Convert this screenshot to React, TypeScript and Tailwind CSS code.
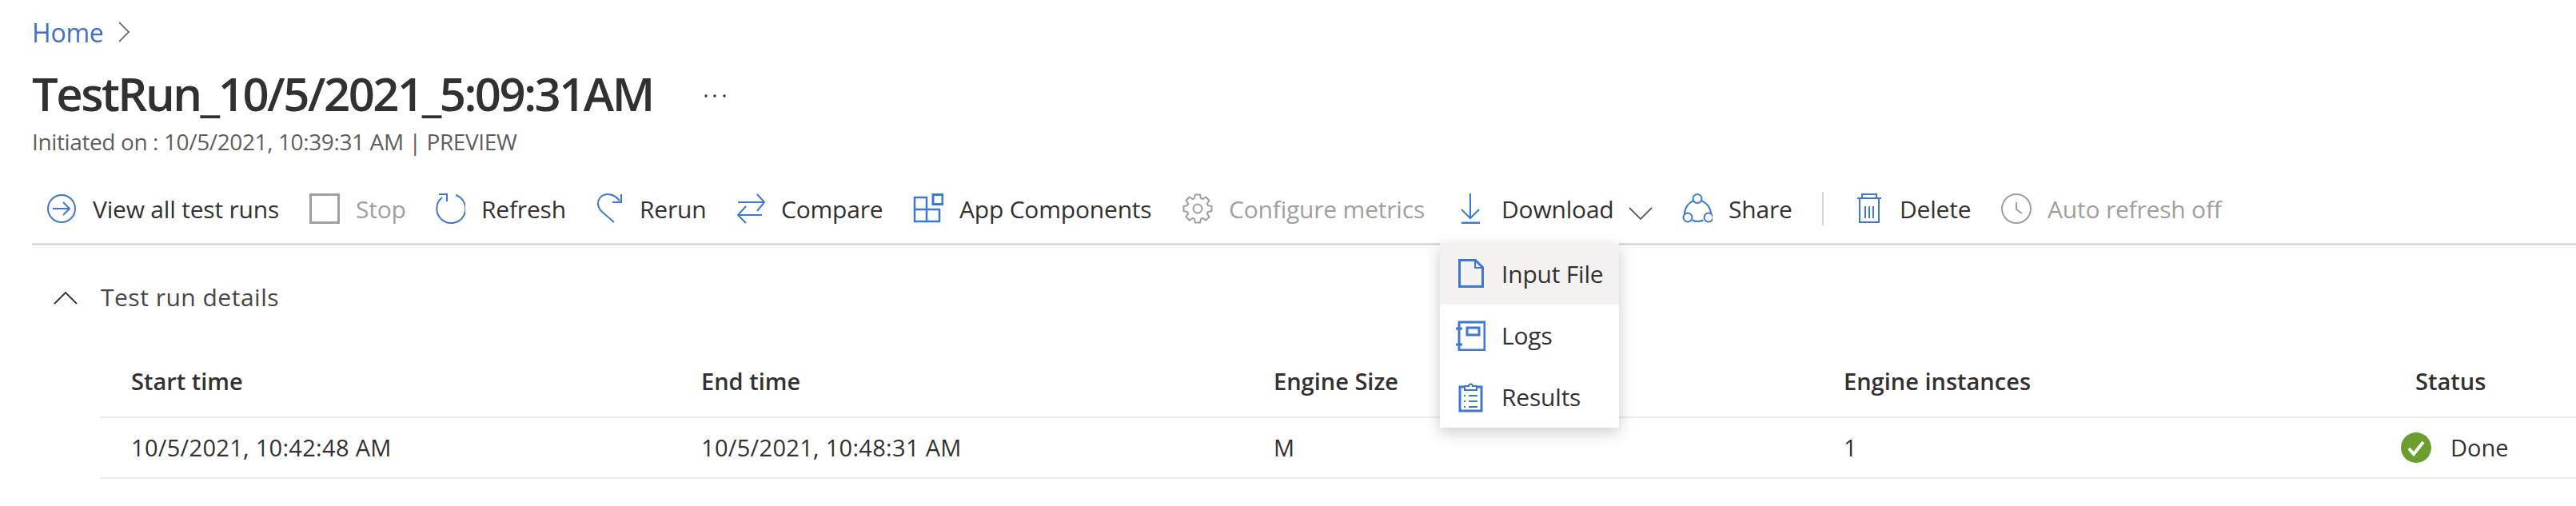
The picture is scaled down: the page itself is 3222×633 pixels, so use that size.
import type { ReactNode } from "react";

const font = "font-['Open_Sans','Noto_Sans',sans-serif]";

const IconBox = ({ children }: { children: ReactNode }) => (
  <svg width="38" height="38" viewBox="0 0 38 38" fill="none" stroke="currentColor" strokeWidth="2" className="shrink-0">
    {children}
  </svg>
);

// 8 tooth gear outline for the disabled "Configure metrics" button
const gearPath = () => {
  const pts: string[] = [];
  for (let i = 0; i < 8; i++) {
    const a = (i * Math.PI) / 4 - Math.PI / 2;
    [
      [-0.3, 13.5],
      [-0.17, 17.8],
      [0.17, 17.8],
      [0.3, 13.5],
    ].forEach(([d, r]) => {
      pts.push(`${(19 + r * Math.cos(a + d)).toFixed(1)} ${(19 + r * Math.sin(a + d)).toFixed(1)}`);
    });
  }
  return `M${pts.join("L")}Z`;
};

const tableColumns = [
  { head: "Start time", value: "10/5/2021, 10:42:48 AM", width: "w-[713px]" },
  { head: "End time", value: "10/5/2021, 10:48:31 AM", width: "w-[716px]" },
  { head: "Engine Size", value: "M", width: "w-[713px]" },
  { head: "Engine instances", value: "1", width: "w-[715px]" },
];

const ToolbarButton = ({
  label,
  icon,
  disabled,
  width,
}: {
  label: string;
  icon: ReactNode;
  disabled?: boolean;
  width?: string;
}) => (
  <div className={`flex shrink-0 items-start gap-5 ${width ?? ""}`}>
    <span className={disabled ? "text-[#a19f9d]" : "text-[#3f78d2]"}>
      <IconBox>{icon}</IconBox>
    </span>
    <span
      className={`text-[30px] leading-[40px] tracking-[-0.2px] whitespace-nowrap ${disabled ? "text-[#a19f9d]" : "text-[#323130]"}`}
    >
      {label}
    </span>
  </div>
);

const menuItems = [
  {
    label: "Input File",
    active: true,
    icon: (
      <>
        <path d="M5.5 4.5h20l9 9v24h-29z" transform="translate(0 -3)" strokeWidth="3" />
        <path d="M25 2v9h9" strokeWidth="2" />
      </>
    ),
  },
  {
    label: "Logs",
    icon: (
      <>
        <rect x="5" y="2" width="32" height="35" strokeWidth="3" />
        <rect x="15" y="9" width="15" height="9" strokeWidth="3" />
        <path d="M1 10h8M1 30h8" strokeWidth="3" />
      </>
    ),
  },
  {
    label: "Results",
    icon: (
      <>
        <path d="M12 6H6v30h27V6h-6" strokeWidth="3" />
        <path d="M12 10V5h5a2.5 2.5 0 0 1 5 0h5v5z" strokeWidth="2" />
        <path d="M11 17h2M11 24h2M11 31h2M17 17h11M17 24h11M17 31h11" strokeWidth="2" />
      </>
    ),
  },
];

export default function App() {
  return (
    <div className={`relative h-[633px] w-[3222px] overflow-hidden bg-white pt-[21px] pl-[40px] text-[#323130] ${font}`}>
      {/* breadcrumb */}
      <div className="flex h-[40px] items-center">
        <span className="text-[32px] leading-[40px] tracking-[-0.2px] text-[#3f6fc6]">Home</span>
        <svg width="14" height="26" viewBox="0 0 14 26" fill="none" stroke="#605e5c" strokeWidth="1.6" className="-mt-[2px] ml-[18px]">
          <path d="M1 1l12 12L1 25" />
        </svg>
      </div>

      {/* title */}
      <div className="mt-[16px] flex h-[80px] items-start">
        <h1 className="w-[841px] text-[58px] leading-[80px] font-semibold tracking-[-2.5px] whitespace-nowrap text-[#323130]">
          TestRun_10/5/2021_5:09:31AM
        </h1>
        <svg width="28" height="6" viewBox="0 0 28 6" fill="#323130" className="mt-[40px]">
          <circle cx="2" cy="3" r="1.7" />
          <circle cx="13" cy="3" r="1.7" />
          <circle cx="25" cy="3" r="1.7" />
        </svg>
      </div>
      <p className="mt-[2px] text-[28px] leading-[36px] tracking-[-0.38px] text-[#605e5c]">
        Initiated on : 10/5/2021, 10:39:31 AM | PREVIEW
      </p>

      {/* toolbar */}
      <div className="mt-[47px] flex items-start border-b-[3px] border-[#dcdcdc] pb-[22px] pl-[18px]">
        <div className="flex h-[40px] items-start">
          <ToolbarButton
            label="View all test runs"
            width="w-[329px]"
            icon={
              <>
                <circle cx="19" cy="19" r="17" />
                <path d="M8 19h21M21 11l8 8-8 8" />
              </>
            }
          />
          <ToolbarButton
            label="Stop"
            disabled
            width="w-[157px]"
            icon={<rect x="1.5" y="1.5" width="35" height="35" strokeWidth="3" />}
          />
          <ToolbarButton
            label="Refresh"
            width="w-[198px]"
            icon={
              <>
                <path d="M26 2A18 18 0 1 1 9 5" />
                <path d="M5 1h10v9" />
              </>
            }
          />
          <ToolbarButton
            label="Rerun"
            width="w-[177px]"
            icon={
              <>
                <path d="M33 9C28 3 23 1 18 1C11 1 6 6 6 13c0 4 2 7 5 10l15 13" />
                <path d="M35 1v10H24" />
              </>
            }
          />
          <ToolbarButton
            label="Compare"
            width="w-[223px]"
            icon={
              <>
                <path d="M4 11h32M28 1l9 10-9 11" />
                <path d="M34 27H4M14 16L4 27l10 10" />
              </>
            }
          />
          <ToolbarButton
            label="App Components"
            width="w-[337px]"
            icon={
              <>
                <path d="M2 5h15v30H2zM2 20h31v15H17" strokeWidth="2.5" />
                <rect x="25" y="1.5" width="12" height="12" strokeWidth="3" />
              </>
            }
          />
          <ToolbarButton
            label="Configure metrics"
            disabled
            width="w-[341px]"
            icon={
              <>
                <path d={gearPath()} />
                <circle cx="19" cy="19" r="5.5" />
              </>
            }
          />
          <div className="flex w-[284px] shrink-0 items-start gap-5">
            <span className="text-[#3f78d2]">
              <IconBox>
                <path d="M19 0v31M8 20l11 11 11-11" />
                <path d="M8 37h23" strokeWidth="3" />
              </IconBox>
            </span>
            <span className="w-[139px] shrink-0 text-[30px] leading-[40px] tracking-[-0.2px] whitespace-nowrap text-[#323130]">
              Download
            </span>
            <svg width="30" height="16" viewBox="0 0 30 16" fill="none" stroke="#605e5c" strokeWidth="1.8" className="mt-[17px] shrink-0">
              <path d="M1 1l14 14L29 1" />
            </svg>
          </div>
          <ToolbarButton
            label="Share"
            width="w-[175px]"
            icon={
              <>
                <circle cx="19" cy="6.5" r="5.5" />
                <circle cx="7" cy="30" r="5.5" />
                <circle cx="33" cy="30" r="5.5" />
                <path d="M14.5 9A18 18 0 0 0 3 25.5M23.5 9A18 18 0 0 1 36 25.5M12.5 33.5a18 18 0 0 0 14 0" />
              </>
            }
          />
          <div className="-mt-[2px] h-[42px] w-[2px] shrink-0 bg-[#d6d6d6]" />
          <div className="w-[37px] shrink-0" />
          <ToolbarButton
            label="Delete"
            width="w-[185px]"
            icon={
              <path d="M5 6h30M11 6V1h18v5M8 6v30h24V6M15 16v15M20 16v15M25 16v15" />
            }
          />
          <ToolbarButton
            label="Auto refresh off"
            disabled
            icon={
              <>
                <circle cx="19" cy="19" r="18" />
                <path d="M19 11v9l7 5" />
              </>
            }
          />
        </div>
      </div>

      {/* details accordion */}
      <div className="mt-[45px] flex h-[40px] items-center pl-[27px]">
        <svg width="30" height="16" viewBox="0 0 30 16" fill="none" stroke="#323130" strokeWidth="1.8" className="mt-[2px] shrink-0">
          <path d="M1 15L15 1l14 14" />
        </svg>
        <span className="ml-[29px] text-[30px] leading-[40px] tracking-[0.5px] text-[#484644]">Test run details</span>
      </div>

      {/* details table */}
      <div className="mt-[67px] ml-[86px]">
        <div className="flex border-b-[2px] border-[#edebe9] pb-[26px] pl-[38px]">
          {tableColumns.map((c) => (
            <div key={c.head} className={`${c.width} shrink-0 text-[29px] leading-[36px] font-semibold`}>
              {c.head}
            </div>
          ))}
          <div className="text-[29px] leading-[36px] font-semibold">Status</div>
        </div>
        <div className="flex h-[76px] items-center border-b-[2px] border-[#edebe9] pl-[38px]">
          {tableColumns.map((c) => (
            <div key={c.head} className={`${c.width} shrink-0 text-[29px] leading-[36px] tracking-[0.3px]`}>
              {c.value}
            </div>
          ))}
          <div className="-ml-[18px] flex items-center gap-[24px]">
            <svg width="38" height="38" viewBox="0 0 38 38" className="shrink-0">
              <circle cx="19" cy="19" r="19" fill="#6b9f2d" />
              <path d="M10 20l6 7 12-15" fill="none" stroke="white" strokeWidth="4" />
            </svg>
            <span className="text-[29px] leading-[36px]">Done</span>
          </div>
        </div>
      </div>

      {/* download menu */}
      <div className="absolute top-[304px] left-[1801px] w-[224px] bg-white shadow-[0_6px_18px_rgba(0,0,0,0.2)]">
        {menuItems.map((m) => (
          <div
            key={m.label}
            className={`flex h-[77px] items-center gap-[20px] pl-[19px] ${m.active ? "bg-[#f3f2f1]" : ""}`}
          >
            <svg width="38" height="38" viewBox="0 0 38 38" fill="none" stroke="#3f78d2" className="shrink-0">
              {m.icon}
            </svg>
            <span className="text-[30px] leading-[40px] tracking-[-0.2px] whitespace-nowrap text-[#323130]">{m.label}</span>
          </div>
        ))}
      </div>
    </div>
  );
}
